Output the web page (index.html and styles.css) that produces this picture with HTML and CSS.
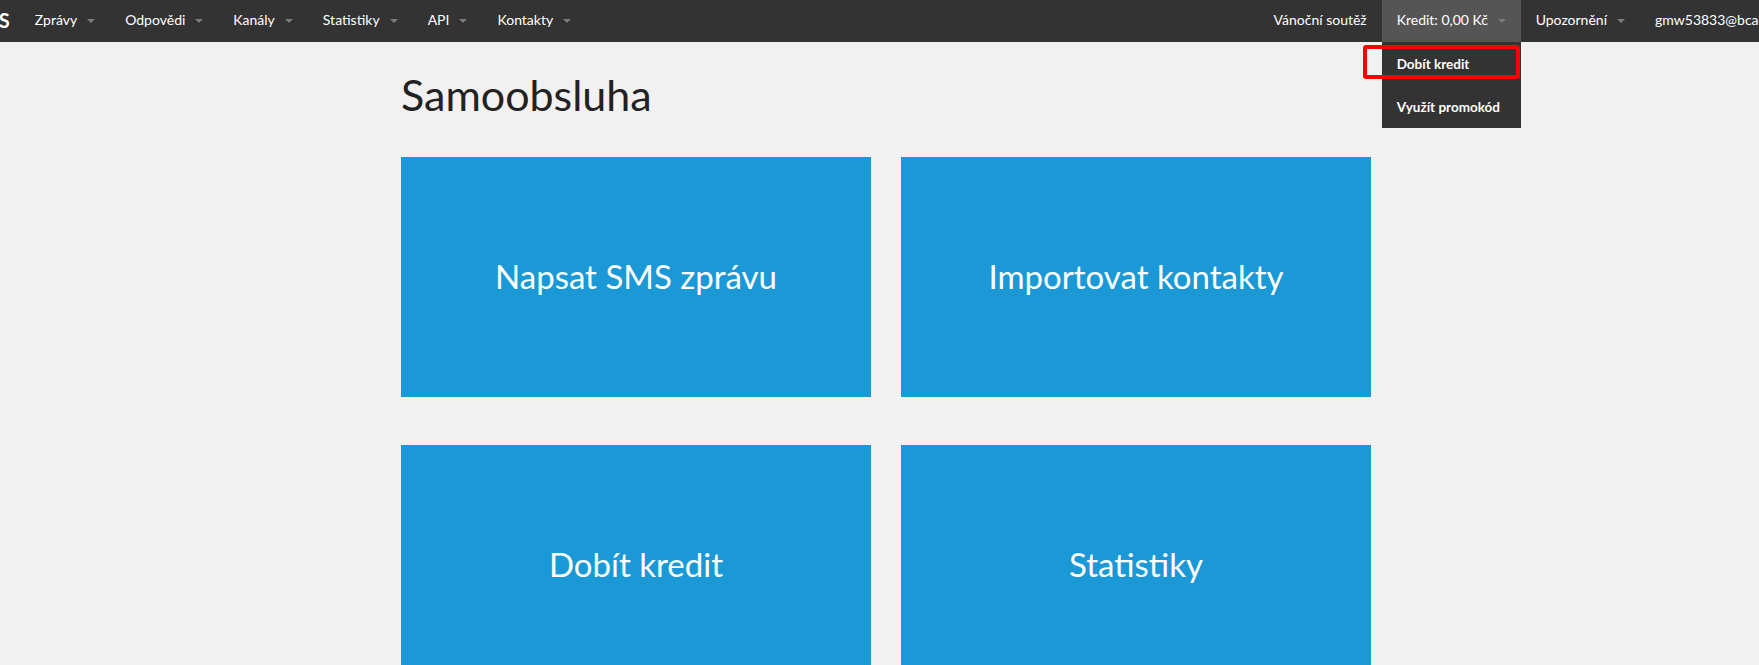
FILE: index.html
```html
<!DOCTYPE html>
<html lang="cs">
<head>
<meta charset="utf-8">
<title>Samoobsluha</title>
<link rel="stylesheet" href="styles.css">
</head>
<body>
<header class="navbar">
  <div class="navbar-inner">
    <a class="brand" href="#">SMS</a>
    <ul class="nav nav-left">
      <li class="nav-item"><a href="#">Zprávy<span class="caret"></span></a></li>
      <li class="nav-item"><a href="#">Odpovědi<span class="caret"></span></a></li>
      <li class="nav-item"><a href="#">Kanály<span class="caret"></span></a></li>
      <li class="nav-item"><a href="#">Statistiky<span class="caret"></span></a></li>
      <li class="nav-item"><a href="#">API<span class="caret"></span></a></li>
      <li class="nav-item"><a href="#">Kontakty<span class="caret"></span></a></li>
    </ul>
    <ul class="nav nav-right">
      <li class="nav-item"><a href="#">Vánoční soutěž</a></li>
      <li class="nav-item nav-item-open">
        <a href="#">Kredit: 0,00 Kč<span class="caret"></span></a>
        <ul class="dropdown">
          <li><a href="#">Dobít kredit</a></li>
          <li><a href="#">Využít promokód</a></li>
        </ul>
        <span class="highlight"></span>
      </li>
      <li class="nav-item"><a href="#">Upozornění<span class="caret"></span></a></li>
      <li class="nav-item nav-user"><a href="#">gmw53833@bcaoo.com<span class="caret"></span></a></li>
    </ul>
  </div>
</header>
<main class="container">
  <h1 class="page-title">Samoobsluha</h1>
  <div class="tiles">
    <a class="tile" href="#">Napsat SMS zprávu</a>
    <a class="tile" href="#">Importovat kontakty</a>
    <a class="tile" href="#">Dobít kredit</a>
    <a class="tile" href="#">Statistiky</a>
  </div>
</main>
</body>
</html>
```

FILE: styles.css
```css
html, body {
  margin: 0;
  padding: 0;
  overflow: hidden;
}
body {
  background: #f1f1f1;
  font-family: Lato, "Noto Sans", sans-serif;
  color: #222;
}
a { text-decoration: none; color: inherit; }
ul { list-style: none; margin: 0; padding: 0; }

.navbar {
  background: #333333;
  height: 42px;
}
.navbar-inner {
  display: flex;
  width: 1815px;
  height: 42px;
}
.brand {
  display: block;
  margin-left: -31px;
  padding-right: 10px;
  color: #fff;
  font-size: 20px;
  font-weight: 700;
  line-height: 40px;
  white-space: nowrap;
}
.nav {
  display: flex;
  height: 42px;
}
.nav-right { margin-left: auto; }
.nav-item {
  position: relative;
}
.nav-item > a {
  display: flex;
  align-items: center;
  height: 42px;
  padding: 0 15px 3px;
  box-sizing: border-box;
  color: #fff;
  font-size: 14px;
  white-space: nowrap;
}
.caret {
  display: inline-block;
  width: 0;
  height: 0;
  margin-left: 10px;
  margin-top: 2px;
  border-left: 4.5px solid transparent;
  border-right: 4.5px solid transparent;
  border-top: 4.5px solid #7b7b7b;
}
.nav-item-open > a {
  background: #555555;
  width: 139px;
}
.nav-user > a { width: 175px; }

.dropdown {
  position: absolute;
  top: 42px;
  left: 0;
  width: 139px;
  background: #333333;
  z-index: 2;
}
.dropdown a {
  display: block;
  height: 43px;
  line-height: 44px;
  padding: 0 15px;
  color: #fff;
  font-size: 13.5px;
  font-weight: 700;
  white-space: nowrap;
}
.highlight {
  position: absolute;
  left: -19px;
  top: 45px;
  width: 157px;
  height: 34px;
  box-sizing: border-box;
  border: 4px solid #ff0000;
  border-radius: 3px;
  z-index: 3;
}

.container {
  width: 970px;
  margin: 0 auto;
  padding-left: 13px;
}
.page-title {
  margin: 29px 0 38px;
  font-size: 43px;
  font-weight: 400;
  line-height: 48px;
  color: #222;
}
.tiles {
  display: grid;
  grid-template-columns: 470px 470px;
  column-gap: 30px;
  row-gap: 48px;
}
.tile {
  display: flex;
  align-items: center;
  justify-content: center;
  height: 240px;
  background: #1a99d6;
  color: #fff;
  font-size: 33px;
  padding-bottom: 2px;
  box-sizing: border-box;
}
```
